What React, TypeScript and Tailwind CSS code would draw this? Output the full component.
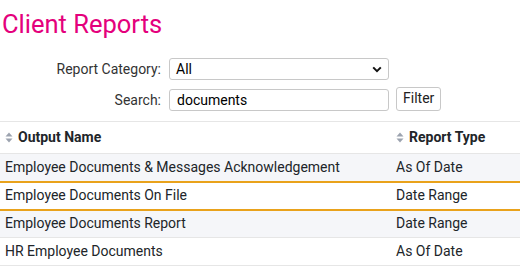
import React from 'react';

const rows = [
  { name: 'Employee Documents & Messages Acknowledgement', type: 'As Of Date', shade: true, highlight: true },
  { name: 'Employee Documents On File', type: 'Date Range', shade: false, highlight: true },
  { name: 'Employee Documents Report', type: 'Date Range', shade: true, highlight: false },
  { name: 'HR Employee Documents', type: 'As Of Date', shade: false, highlight: false },
];

const SortIcon: React.FC = () => (
  <svg width="8" height="11" viewBox="0 0 8 11" className="mr-[5px] shrink-0">
    <path d="M4 0.5 L7.5 4.5 H0.5 Z" fill="#9ca3af" />
    <path d="M4 10.5 L7.5 6.5 H0.5 Z" fill="#9ca3af" />
  </svg>
);

const App: React.FC = () => {
  return (
    <div className="w-[520px] h-[277px] bg-white overflow-hidden font-['Roboto',sans-serif] text-[14px] text-[#212529]">
      <h1 className="pl-[2px] pt-[9px] text-[25.5px] leading-[31px] text-[#e4007c]">Client Reports</h1>

      <div className="mt-[18px] flex flex-col gap-[9px]">
        <div className="flex items-center">
          <label className="w-[161px] text-right text-[#333]">Report Category:</label>
          <div className="ml-[8px] w-[220px] h-[22px] border border-[#c8c8c8] rounded-[3px] flex items-center justify-between pl-[6px] pr-[6px]">
            <span className="text-black">All</span>
            <svg width="10" height="7" viewBox="0 0 10 7">
              <path d="M1.2 1.4 L5 5.2 L8.8 1.4" fill="none" stroke="#111" strokeWidth="2" />
            </svg>
          </div>
        </div>
        <div className="flex items-center">
          <label className="w-[161px] text-right text-[#333]">Search:</label>
          <div className="ml-[8px] w-[220px] h-[22px] border border-[#c8c8c8] rounded-[3px] flex items-center pl-[7px]">
            <span className="text-black">documents</span>
          </div>
          <button className="ml-[7px] -mt-[3px] h-[24px] px-[6px] border border-[#c8c8c8] rounded-[3px] bg-white text-[#222]">
            Filter
          </button>
        </div>
      </div>

      <table className="mt-[10px] w-full border-collapse">
        <thead>
          <tr className="h-[32px] border-t border-b border-[#e6e6e6]">
            <th className="pl-[5px] text-left font-bold">
              <div className="flex items-center"><SortIcon />Output Name</div>
            </th>
            <th className="w-[124px] text-left font-bold">
              <div className="flex items-center"><SortIcon />Report Type</div>
            </th>
          </tr>
        </thead>
        <tbody>
          {rows.map((r) => (
            <tr
              key={r.name}
              className={`h-[28px] ${r.highlight ? 'border-b-2 border-[#e9a21b]' : 'border-b border-[#e6e6e6]'} ${r.shade ? 'bg-[#f5f6f9]' : 'bg-white'}`}
            >
              <td className="pl-[5px]">{r.name}</td>
              <td>{r.type}</td>
            </tr>
          ))}
        </tbody>
      </table>
    </div>
  );
};

export default App;
